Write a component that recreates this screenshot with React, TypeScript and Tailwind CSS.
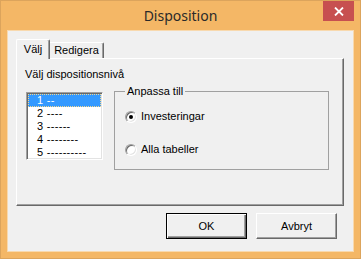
import React from "react";

const levels = ["1 --", "2 ----", "3 ------", "4 --------", "5 ----------"];

const Radio = ({ checked, label }: { checked?: boolean; label: string }) => (
  <div className="flex items-center h-[13px] gap-[4px]">
    <span className="relative w-[12px] h-[12px] rounded-full bg-white border border-t-[#a0a0a0] border-l-[#a0a0a0] border-r-white border-b-white shadow-[inset_1px_1px_0_#696969,inset_-1px_-1px_0_#e3e3e3] flex items-center justify-center">
      {checked && <span className="w-[4px] h-[4px] rounded-full bg-black" />}
    </span>
    <span className="leading-[13px]">{label}</span>
  </div>
);

export default function App() {
  return (
    <div
      className="w-[361px] h-[259px] bg-[#f4b766] border border-[#dca45c] flex flex-col text-[11px] text-black"
      style={{ fontFamily: '"Liberation Sans", Arial, sans-serif' }}
    >
      {/* Title bar */}
      <div className="h-[30px] grid grid-cols-[1fr_auto_1fr] items-start">
        <div />
        <div
          className="pt-[5px] text-[14px] leading-[20px] text-[#2a2a2a]"
          style={{ fontFamily: '"Noto Sans", "Open Sans", sans-serif' }}
        >
          Disposition
        </div>
        <div className="justify-self-end mr-[6px] w-[31px] h-[20px] bg-[#c75050] flex items-center justify-center">
          <svg width="10" height="9" viewBox="0 0 10 9">
            <path d="M1 0.5 L9 8.5 M9 0.5 L1 8.5" stroke="white" strokeWidth="1.8" />
          </svg>
        </div>
      </div>

      {/* Client area */}
      <div className="mx-[7px] h-[220px] bg-[#f0f0f0] shadow-[0_0_0_1px_#f8d9ae] flex flex-col">
        <div className="pl-[8px] pt-[8px]">
          {/* Tabs */}
          <div className="h-[19px] flex items-end">
            <div className="relative z-10 h-[20px] w-[34px] mb-[-1px] bg-[#f0f0f0] border-l border-t border-white border-r border-r-[#696969] rounded-tl-[2px] rounded-tr-[2px] shadow-[inset_-1px_0_0_#a0a0a0] flex items-center justify-center pb-[1px]">
              Välj
            </div>
            <div className="-ml-[2px] h-[16px] w-[56px] bg-[#f0f0f0] border-t border-white border-r border-r-[#696969] rounded-tr-[2px] shadow-[inset_-1px_0_0_#a0a0a0] flex items-center justify-center pl-[2px]">
              Redigera
            </div>
          </div>

          {/* Tab panel */}
          <div className="w-[328px] h-[148px] bg-[#f0f0f0] border border-t-white border-l-white border-r-[#696969] border-b-[#696969] shadow-[inset_-1px_-1px_0_#a0a0a0] pt-[9px] pl-[9px]">
            <div className="leading-[13px] -ml-px">Välj dispositionsnivå</div>
            <div className="mt-[10px] flex items-start">
              {/* List box */}
              <div className="mt-[1px] w-[77px] h-[68px] overflow-hidden bg-white border border-t-[#a0a0a0] border-l-[#a0a0a0] border-r-white border-b-white shadow-[inset_1px_1px_0_#696969,inset_-1px_-1px_0_#e3e3e3] p-px">
                {levels.map((l, i) => (
                  <div
                    key={l}
                    className={
                      i === 0
                        ? "h-[13px] leading-[13px] pl-[9px] whitespace-pre tracking-[0.3px] bg-[#3399ff] text-white outline outline-1 outline-dotted outline-[#f5d78e] -outline-offset-1"
                        : "h-[13px] leading-[13px] pl-[9px] whitespace-pre tracking-[0.3px]"
                    }
                  >
                    {l}
                  </div>
                ))}
              </div>

              {/* Group box */}
              <div className="relative ml-[11px] w-[215px] h-[79px] border border-[#a0a0a0] pt-[18px] pl-[10px] flex flex-col gap-[20px]">
                <span className="absolute left-[10px] -top-[7px] px-[2px] bg-[#f0f0f0] leading-[13px]">
                  Anpassa till
                </span>
                <Radio checked label="Investeringar" />
                <Radio label="Alla tabeller" />
              </div>
            </div>
          </div>
        </div>

        {/* Buttons */}
        <div className="mt-[7px] flex justify-end gap-[9px] pr-[16px]">
          <button className="w-[81px] h-[26px] bg-[#f0f0f0] border border-black shadow-[inset_1px_1px_0_#fff,inset_-1px_-1px_0_#696969,inset_-2px_-2px_0_#a0a0a0] flex items-center justify-center">
            OK
          </button>
          <button className="w-[81px] h-[26px] bg-[#f0f0f0] border border-t-white border-l-white border-r-[#696969] border-b-[#696969] shadow-[inset_-1px_-1px_0_#a0a0a0] flex items-center justify-center">
            Avbryt
          </button>
        </div>
      </div>
    </div>
  );
}
